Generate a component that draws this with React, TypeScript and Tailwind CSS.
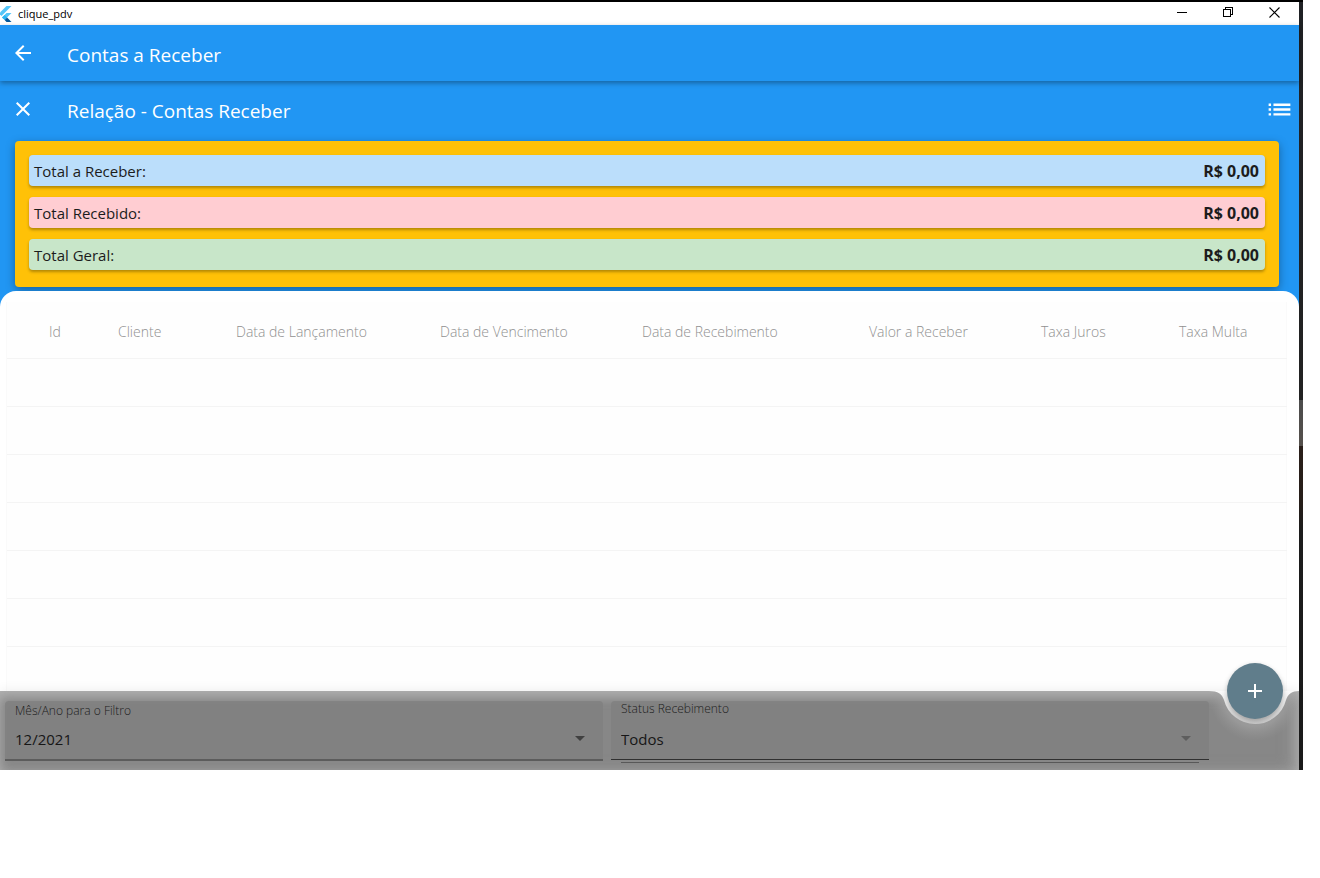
import { useId } from 'react';
import type { ReactNode } from 'react';
import { MdAdd, MdArrowBack, MdClose, MdList } from 'react-icons/md';

const totals = [
  { label: 'Total a Receber:', value: 'R$ 0,00', tone: 'bg-[#bbdefb]' },
  { label: 'Total Recebido:', value: 'R$ 0,00', tone: 'bg-[#ffcdd2]' },
  { label: 'Total Geral:', value: 'R$ 0,00', tone: 'bg-[#c8e6c9]' },
];

const columns = [
  { title: 'Id', width: 'w-[111px]' },
  { title: 'Cliente', width: 'w-[118px]' },
  { title: 'Data de Lançamento', width: 'w-[204px]' },
  { title: 'Data de Vencimento', width: 'w-[202px]' },
  { title: 'Data de Recebimento', width: 'w-[227px]' },
  { title: 'Valor a Receber', width: 'w-[172px]' },
  { title: 'Taxa Juros', width: 'w-[138px]' },
  { title: 'Taxa Multa', width: 'w-[108px]' },
];

const emptyRows = [1, 2, 3, 4, 5, 6];

function FlutterLogo() {
  return (
    <svg viewBox="0 0 12 16" className="h-4 w-3" aria-hidden="true">
      <path d="M6.5 0H11.5L1.5 10L-1 7.5Z" fill="#54c5f8" />
      <path d="M6.5 7H11.5L7.2 11.3L4.7 13.8L2 11.5Z" fill="#54c5f8" />
      <path d="M4.6 9L7.1 11.5L4.6 14L2 11.5Z" fill="#29b6f6" />
      <path d="M4.6 14L7.1 11.5L11.5 16H6.5Z" fill="#01579b" />
    </svg>
  );
}

function TitleBar() {
  return (
    <header className="flex h-[23px] items-center justify-between bg-white pr-[19px] text-black">
      <div className="flex items-center gap-1.5">
        <FlutterLogo />
        <span className="text-[11px] leading-4">clique_pdv</span>
      </div>
      <div className="flex items-center gap-[35px] pb-0.5">
        <button type="button" aria-label="Minimizar">
          <svg viewBox="0 0 11 11" className="size-[11px]" shapeRendering="crispEdges">
            <path d="M0 5h10v1H0z" />
          </svg>
        </button>
        <button type="button" aria-label="Restaurar">
          <svg viewBox="0 0 11 11" className="size-[11px]" fill="none" stroke="#000" shapeRendering="crispEdges">
            <path d="M0.5 2.5h7v7h-7z M2.5 2.5v-2h7v7h-2" />
          </svg>
        </button>
        <button type="button" aria-label="Fechar">
          <svg viewBox="0 0 11 11" className="size-[11px]" fill="none" stroke="#000" strokeWidth="1.1">
            <path d="M0.5 0.5l10 10M10.5 0.5l-10 10" />
          </svg>
        </button>
      </div>
    </header>
  );
}

function AppBar({ icon, title, action, raised }: { icon: ReactNode; title: string; action?: ReactNode; raised?: boolean }) {
  return (
    <div
      className={
        raised
          ? 'relative flex h-14 items-center gap-8 bg-[#2196f3] pl-[11px] text-white shadow-[0_2px_5px_rgba(0,0,0,0.35)]'
          : 'flex h-14 items-center gap-8 pr-[5px] pl-[11px] text-white'
      }
    >
      {icon}
      <h1 className="flex-1 pt-1 text-[19px] leading-6">{title}</h1>
      {action}
    </div>
  );
}

function Field({
  label,
  value,
  line,
  arrow,
  children,
  labelClass,
}: {
  label: string;
  value: string;
  line: string;
  arrow: string;
  labelClass: string;
  children?: ReactNode;
}) {
  const id = useId();
  return (
    <div className="flex min-w-0 flex-1 flex-col">
      <div className={`grid grid-rows-[24px_1fr] rounded-t bg-[#808080]/80 ${line}`}>
        <label htmlFor={id} className={`px-2.5 text-[12px] leading-4 font-light text-[#1c1c1c] ${labelClass}`}>
          {label}
        </label>
        <div className="flex items-center pb-1.5">
          <select
            id={id}
            defaultValue={value}
            className="-mr-7 w-full appearance-none bg-transparent pr-7 pl-2.5 text-[15px] leading-6 text-[#161616] outline-none"
          >
            <option>{value}</option>
          </select>
          <svg viewBox="0 0 10 5" className={`pointer-events-none mr-4 h-[5px] w-2.5 shrink-0 ${arrow}`} aria-hidden="true">
            <path d="M0 0h10L5 5z" />
          </svg>
        </div>
      </div>
      {children}
    </div>
  );
}

function NotchCutout() {
  return (
    <svg viewBox="0 0 90 60" className="absolute top-0 right-0 h-[60px] w-[90px]" aria-hidden="true">
      <defs>
        <linearGradient id="notch" x1="0" y1="0" x2="0" y2="32" gradientUnits="userSpaceOnUse">
          <stop offset="0" stopColor="#fbfbfb" />
          <stop offset="0.45" stopColor="#e4e4e4" />
          <stop offset="1" stopColor="#cbcbcb" />
        </linearGradient>
        <radialGradient id="glow" cx="46" cy="4" r="46" gradientUnits="userSpaceOnUse">
          <stop offset="0.5" stopColor="#aaaaaa" />
          <stop offset="1" stopColor="#999999" stopOpacity="0" />
        </radialGradient>
      </defs>
      <circle cx="46" cy="4" r="46" fill="url(#glow)" />
      <path d="M0 0C9 0 13 3 15 9A32 32 0 0 0 77 9C79 3 83 0 90 0Z" fill="url(#notch)" />
    </svg>
  );
}

export default function App() {
  return (
    <div className="bg-white pr-[17px] font-['Open_Sans','Noto_Sans',sans-serif]">
      <div className="flex border-t-2 border-black">
        <div className="flex min-w-0 flex-1 flex-col bg-[#2196f3]">
          <TitleBar />
          <AppBar
            raised
            title="Contas a Receber"
            icon={
              <button type="button" aria-label="Voltar">
                <MdArrowBack className="size-6" />
              </button>
            }
          />
          <AppBar
            title="Relação - Contas Receber"
            icon={
              <button type="button" aria-label="Fechar relação">
                <MdClose className="size-6" />
              </button>
            }
            action={
              <button type="button" aria-label="Opções">
                <MdList className="size-[29px]" />
              </button>
            }
          />

          <section className="mt-1 mr-5 mb-1 ml-[15px] flex flex-col gap-[11px] rounded bg-[#ffc107] px-3.5 pt-3.5 pb-[17px] shadow-[0_3px_10px_rgba(0,0,0,0.35)]">
            {totals.map((t) => (
              <div
                key={t.label}
                className={`flex h-[31px] items-center justify-between rounded pr-1.5 pl-[5px] text-[15px] leading-6 text-[#1c1c1c] shadow-[0_2px_3px_rgba(0,0,0,0.3)] ${t.tone}`}
              >
                <span>{t.label}</span>
                <strong className="text-base font-bold">{t.value}</strong>
              </div>
            ))}
          </section>

          <main className="relative rounded-t-2xl bg-white pt-[11px] pr-3 pl-1.5">
            <div className="border-x border-[#fafafa] bg-[#fefefe] pb-11">
              <table className="w-full table-fixed border-collapse">
                <thead>
                  <tr className="h-14 border-b border-[#f4f4f4]">
                    {columns.map((c) => (
                      <th
                        key={c.title}
                        className={`${c.width} pt-1 text-left text-sm font-light whitespace-nowrap text-[#909090] first:pl-[42px]`}
                      >
                        {c.title}
                      </th>
                    ))}
                  </tr>
                </thead>
                <tbody>
                  {emptyRows.map((row) => (
                    <tr key={row} className="h-12 border-b border-[#f4f4f4]">
                      <td colSpan={columns.length} />
                    </tr>
                  ))}
                </tbody>
              </table>
            </div>
          </main>

          <footer className="relative flex h-[79px] gap-2 bg-[#878787] pt-2.5 pr-[90px] pl-[5px] shadow-[inset_0_6px_12px_rgba(190,190,190,0.7),inset_-8px_0_14px_rgba(170,170,170,0.5),0_-2px_10px_rgba(0,0,0,0.06)]">
            <Field
              label="Mês/Ano para o Filtro"
              value="12/2021"
              line="h-[60px] border-b-2 border-[#5c5c5c]"
              labelClass="pt-0.5"
              arrow="fill-[#404040]"
            />
            <Field
              label="Status Recebimento"
              value="Todos"
              line="h-[59px] border-b border-[#303030]"
              labelClass=""
              arrow="fill-[#5e5e5e]"
            >
              <div className="mx-2.5 mt-0.5 h-px bg-[#585858]" />
            </Field>
            <NotchCutout />
            <button
              type="button"
              aria-label="Adicionar"
              className="absolute -top-7 right-4 flex size-14 items-center justify-center rounded-full bg-[#607d8b] text-white shadow-[0_2px_5px_rgba(0,0,0,0.25)]"
            >
              <MdAdd className="size-6" />
            </button>
          </footer>
        </div>
        <div
          className="w-1 shrink-0 bg-[linear-gradient(to_bottom,#1f2124_0,#222_398px,#4c4c4c_398px,#55504c_444px,#2a1f1a_444px,#261e19_500px,#1c1c1c_530px,#1a1a1a_100%)]"
          aria-hidden="true"
        />
      </div>
    </div>
  );
}
